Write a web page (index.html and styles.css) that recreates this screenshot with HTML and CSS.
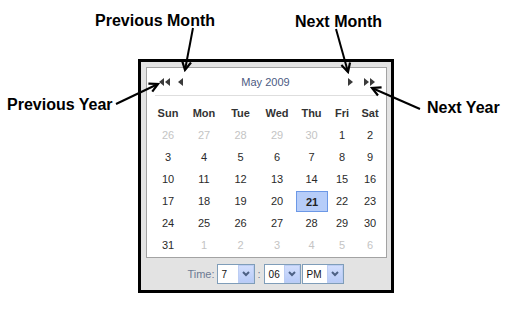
FILE: index.html
```html
<!DOCTYPE html>
<html>
<head>
<meta charset="utf-8">
<link rel="stylesheet" href="styles.css">
</head>
<body>
<div class="page">
  <div class="cal">
    <div class="panel">
      <div class="head">
        <span class="nav dbl-left"><svg width="11" height="8" viewBox="0 0 11 8"><path d="M5 0 L0 4 L5 8 Z M11 0 L6 4 L11 8 Z" fill="#3a3a3a"/></svg></span>
        <span class="nav single-left"><svg width="5" height="8" viewBox="0 0 5 8"><path d="M5 0 L0 4 L5 8 Z" fill="#3a3a3a"/></svg></span>
        <span class="title">May 2009</span>
        <span class="nav single-right"><svg width="5" height="8" viewBox="0 0 5 8"><path d="M0 0 L5 4 L0 8 Z" fill="#3a3a3a"/></svg></span>
        <span class="nav dbl-right"><svg width="11" height="8" viewBox="0 0 11 8"><path d="M0 0 L5 4 L0 8 Z M6 0 L11 4 L6 8 Z" fill="#3a3a3a"/></svg></span>
      </div>
      <div class="sep"></div>
      <table class="days">
        <colgroup>
          <col class="c36"><col class="c36"><col class="c37"><col class="c36"><col class="c33"><col class="c28"><col class="c28">
        </colgroup>
        <thead>
          <tr><th>Sun</th><th>Mon</th><th>Tue</th><th>Wed</th><th>Thu</th><th>Fri</th><th>Sat</th></tr>
        </thead>
        <tbody>
          <tr><td class="other">26</td><td class="other">27</td><td class="other">28</td><td class="other">29</td><td class="other">30</td><td>1</td><td>2</td></tr>
          <tr><td>3</td><td>4</td><td>5</td><td>6</td><td>7</td><td>8</td><td>9</td></tr>
          <tr><td>10</td><td>11</td><td>12</td><td>13</td><td>14</td><td>15</td><td>16</td></tr>
          <tr><td>17</td><td>18</td><td>19</td><td>20</td><td class="sel"><div class="selbox">21</div></td><td>22</td><td>23</td></tr>
          <tr><td>24</td><td>25</td><td>26</td><td>27</td><td>28</td><td>29</td><td>30</td></tr>
          <tr><td>31</td><td class="other">1</td><td class="other">2</td><td class="other">3</td><td class="other">4</td><td class="other">5</td><td class="other">6</td></tr>
        </tbody>
      </table>
    </div>
    <div class="time">
      <span class="tlabel">Time:</span>
      <div class="sel-box w38"><span class="val">7</span><span class="btn"><svg width="8" height="6" viewBox="0 0 8 6"><path d="M1 1 L4 4 L7 1" fill="none" stroke="#4d6185" stroke-width="2"/></svg></span></div>
      <span class="colon">:</span>
      <div class="sel-box w37"><span class="val">06</span><span class="btn"><svg width="8" height="6" viewBox="0 0 8 6"><path d="M1 1 L4 4 L7 1" fill="none" stroke="#4d6185" stroke-width="2"/></svg></span></div>
      <div class="sel-box w42"><span class="val">PM</span><span class="btn"><svg width="8" height="6" viewBox="0 0 8 6"><path d="M1 1 L4 4 L7 1" fill="none" stroke="#4d6185" stroke-width="2"/></svg></span></div>
    </div>
  </div>

  <div class="label l-pm">Previous Month</div>
  <div class="label l-py">Previous Year</div>
  <div class="label l-nm">Next Month</div>
  <div class="label l-ny">Next Year</div>

  <svg class="arrows" width="510" height="317" viewBox="0 0 510 317">
    <defs>
      <marker id="ah" markerWidth="12" markerHeight="12" refX="10" refY="6" orient="auto" markerUnits="userSpaceOnUse">
        <path d="M1.5 1.5 L10 6 L1.5 10.5" fill="none" stroke="#000" stroke-width="2.2" stroke-linejoin="miter"/>
      </marker>
    </defs>
    <line x1="193" y1="28" x2="185" y2="70" stroke="#000" stroke-width="2" marker-end="url(#ah)"/>
    <line x1="116" y1="104" x2="158" y2="84" stroke="#000" stroke-width="2" marker-end="url(#ah)"/>
    <line x1="336" y1="29" x2="348" y2="72" stroke="#000" stroke-width="2" marker-end="url(#ah)"/>
    <line x1="420" y1="109" x2="372" y2="88" stroke="#000" stroke-width="2" marker-end="url(#ah)"/>
  </svg>
</div>
</body>
</html>
```

FILE: styles.css
```css
html, body {
  margin: 0;
  padding: 0;
  background: #fff;
}
body {
  font-family: "Liberation Sans", Arial, sans-serif;
}
.page {
  position: relative;
  width: 510px;
  height: 317px;
  overflow: hidden;
}
.cal {
  box-sizing: border-box;
  width: 256px;
  height: 234px;
  margin: 59px 0 0 138px;
  border: 3px solid #000;
  background: #e3e3e3;
  padding: 5px 4px 0 5px;
  display: flex;
  flex-direction: column;
}
.panel {
  box-sizing: border-box;
  height: 191px;
  background: #fff;
  border: 1px solid #a3a3a3;
  display: flex;
  flex-direction: column;
}
.head {
  height: 27px;
  display: flex;
  align-items: center;
  padding: 0 11px 0 12px;
}
.nav {
  display: flex;
  align-items: center;
}
.single-left { margin-left: 8px; }
.single-right { margin-right: 11px; }
.title {
  flex: 1;
  text-align: center;
  font-size: 11px;
  color: #4c5a82;
}
.sep {
  height: 1px;
  background: #dedede;
  margin: 0 8px;
}
.days {
  border-collapse: collapse;
  border-spacing: 0;
  table-layout: fixed;
  width: 234px;
  margin: 6px 0 0 3px;
  font-size: 11px;
}
.c36 { width: 36px; }
.c37 { width: 37px; }
.c33 { width: 33px; }
.c28 { width: 28px; }
.days th, .days td {
  height: 22px;
  padding: 0;
  text-align: center;
  vertical-align: middle;
}
.days th {
  font-weight: bold;
  color: #333;
}
.days td {
  color: #2a2a2a;
}
.days td.other {
  color: #c4c4c4;
}
.selbox {
  box-sizing: border-box;
  height: 21px;
  margin: 1px 0 0 1px;
  border: 1px solid #6c98e6;
  background: #b6cdf9;
  font-weight: bold;
  color: #222;
  display: flex;
  align-items: center;
  justify-content: center;
}
.time {
  display: flex;
  align-items: center;
  justify-content: center;
  margin-top: 6px;
  font-size: 10px;
  padding-right: 1px;
}
.tlabel {
  color: #6d7a93;
  font-size: 11px;
  margin-right: 2px;
}
.colon {
  color: #6d7a93;
  font-size: 11px;
  margin: 0 3px 0 2px;
}
.sel-box {
  box-sizing: border-box;
  height: 20px;
  border: 1px solid #7f9db9;
  background: #fff;
  display: flex;
  align-items: stretch;
  margin-right: 1px;
}
.w38 { width: 38px; }
.w37 { width: 37px; }
.w42 { width: 42px; }
.val {
  flex: 1;
  padding-left: 4px;
  display: flex;
  align-items: center;
  color: #111;
}
.btn {
  width: 16px;
  box-sizing: border-box;
  background: linear-gradient(#d2defd, #b8cbf8);
  border: 1px solid #bccdf3;
  display: flex;
  align-items: center;
  justify-content: center;
}
.label {
  position: absolute;
  font-size: 16px;
  font-weight: bold;
  line-height: 18px;
  color: #000;
  white-space: nowrap;
}
.l-pm { left: 95px; top: 12px; }
.l-py { left: 7px; top: 96px; }
.l-nm { left: 295px; top: 13px; }
.l-ny { left: 427px; top: 99px; }
.arrows {
  position: absolute;
  left: 0;
  top: 0;
  pointer-events: none;
}
```
